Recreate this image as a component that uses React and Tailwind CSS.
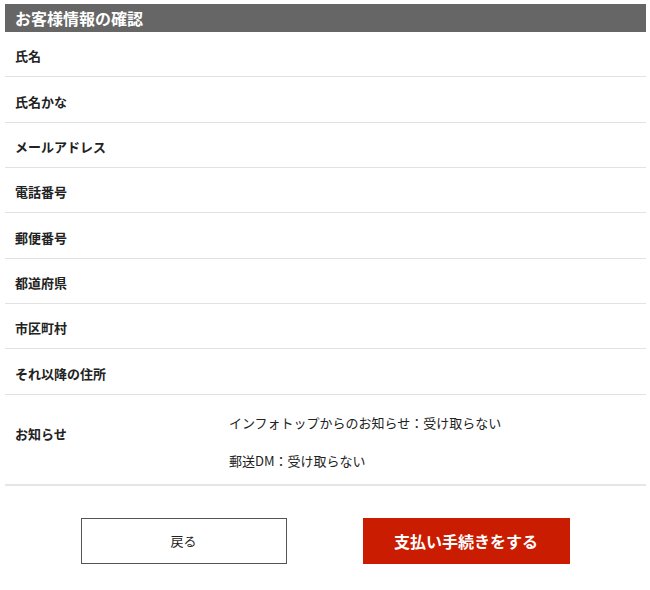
import React from 'react';

const rows = [
    '氏名',
    '氏名かな',
    'メールアドレス',
    '電話番号',
    '郵便番号',
    '都道府県',
    '市区町村',
    'それ以降の住所',
];

const App = () => {
    return (
        <div
            className="w-[650px] min-h-[590px] bg-white pt-[4px] pl-[5px] pr-[4px] text-[#222]"
            style={{ fontFamily: '"Noto Sans CJK JP", "Noto Sans", sans-serif' }}
        >
            <h2 className="h-[28px] bg-[#666666] pl-[10px] text-[16px] font-bold leading-[28px] text-white">
                お客様情報の確認
            </h2>

            {rows.map((label) => (
                <div key={label} className="flex h-[45.35px] items-center border-b border-[#e2e2e2] pl-[10px]">
                    <div className="w-[214px] pt-[4px] text-[13px] font-bold">{label}</div>
                    <div className="flex-1" />
                </div>
            ))}

            {/* お知らせ */}
            <div className="flex h-[91px] items-start border-b-2 border-[#e6e6e6] pl-[10px]">
                <div className="mt-[29px] w-[214px] text-[13px] font-bold leading-[20px]">お知らせ</div>
                <div className="mt-[18px] flex flex-col gap-[18px] text-[13px] leading-[20px]">
                    <p>インフォトップからのお知らせ：受け取らない</p>
                    <p>郵送DM：受け取らない</p>
                </div>
            </div>

            <div className="mt-[32px] flex justify-center gap-[76px] pr-[1px]">
                <button className="h-[46px] w-[206px] border border-[#555] bg-white text-[13px] text-[#222]">
                    戻る
                </button>
                <button className="h-[46px] w-[207px] bg-[#c91c00] text-[16px] font-bold text-white">
                    支払い手続きをする
                </button>
            </div>
        </div>
    );
};

export default App;
